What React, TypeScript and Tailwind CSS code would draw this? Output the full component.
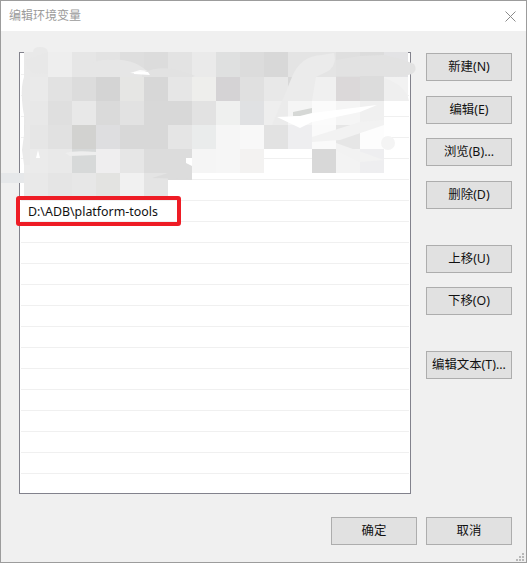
const UI_FONT = "font-['Noto_Sans','Noto_Sans_CJK_SC',sans-serif]";

// pixelated smear over the list, 24px cells starting at x=24, y=53
const mosaic: (string | null)[][] = [
  ["#e9e9e9", "#eeeeee", "#e6e6e6", "#e3e3e3", "#dedede", "#dcdcdc", "#e3e3e3", "#eaeaea", "#dfe0e0", "#dcdcdc", "#d8d8d8", "#e4e4e4", "#e4e4e4", "#dfdfdf", "#dcdcdc", "#e3e3e5"],
  ["#eaeaea", "#e2e2e2", "#dcdcdc", "#d4d4d4", "#e6e6e4", "#d7d7d7", "#e6e6e6", "#eeeeec", "#d5d3d5", "#e0e0e0", "#e8e8e8", "#d8d8d8", "#f0f0f0", "#dbd8d9", "#dcdcdc", "#f2f2f2"],
  ["#e8e8e8", "#dfdfdf", "#e8e8e8", "#dadada", "#e2e2e2", "#d8d8d8", "#d8d8d8", "#e2e2e2", "#eff0ef", "#e0e1e3", "#eeeeee", "#f5f5f5", "#fbfbfb", "#f5f5f5", "#f0f0f0", null],
  ["#e6e6e6", "#e1e1e1", "#d2d2d0", "#dedee0", "#d8d8d8", "#d8d8d8", "#e5e5e5", "#eaecec", "#f6f6f6", "#f8f8f8", "#e2e2e2", "#eeeef0", "#fafafa", "#e6e6e6", "#fdfdfd", null],
  ["#ebebeb", "#e9e9e9", "#d7d9d9", "#efeeef", "#e6e6e6", "#dcdcdc", "#dcdcdc", "#f5f5f5", "#f6f6f6", "#f3f2f1", null, null, "#d8d8d8", "#f3f3f3", "#eeeef0", null],
  ["#e9e9e9", "#e5e5e5", "#e7e7e7", "#e3e3e1", "#f1f1f1", "#e4e4e4", null, null, null, null, null, null, null, null, null, null],
];

// bits of the desktop showing through the window's left edge
const edgeMarks: [number, number, string][] = [
  [15, 5, "#4a3a6a"], [45, 1, "#4a7fb5"], [54, 1, "#4a7fb5"], [69, 3, "#c08a40"], [113, 6, "#6e2a50"],
  [135, 6, "#6e2a50"], [155, 2, "#8a6a30"], [158, 2, "#44403a"], [197, 4, "#5a5a7a"], [212, 1, "#777777"],
  [288, 3, "#5a90c8"], [293, 3, "#5a90c8"], [311, 1, "#777777"], [319, 1, "#4a7fb5"], [328, 1, "#4a7fb5"],
  [342, 1, "#333333"], [350, 1, "#333333"], [366, 1, "#333333"], [371, 1, "#333333"], [392, 1, "#2f5a50"],
  [413, 1, "#2f5a50"], [430, 4, "#4a7fb5"], [447, 6, "#6e2a50"], [453, 2, "#c08a40"], [469, 4, "#4a5a90"], [485, 1, "#777777"],
];

function DialogButton({ label, className = "" }: { label: string; className?: string }) {
  return (
    <button className={`flex h-[28px] w-[86px] items-center justify-center border border-[#adadad] bg-[#e1e1e1] text-[12.4px] text-[#111] ${className}`}>
      {label}
    </button>
  );
}

function SmearOverlay() {
  return (
    <svg className="pointer-events-none absolute left-0 top-0" width="527" height="563" viewBox="0 0 527 563">
      <g shapeRendering="crispEdges">
        {mosaic.map((row, r) =>
          row.map((fill, c) =>
            fill ? <rect key={`${r}-${c}`} x={24 + c * 24} y={r === 0 ? 52 : 53 + r * 24} width="24" height={r === 0 ? 25 : 24} fill={fill} /> : null,
          ),
        )}
        <rect x="1" y="173" width="23" height="10" fill="#e6e8ea" />
        <rect x="168" y="173" width="24" height="7" fill="#dcdcdc" />
      </g>
      <path d="M33 52 Q33 47 40 47 Q47 47 48 52 L48 77 L33 77 Z" fill="#e9e9e9" />
      <path d="M48 52 L26 60 Q24 67 33 73 L48 74 Z" fill="#e8e8e8" />
      <path d="M24 77 Q21 85 22 100 Q23 115 26 120 Q24 135 22 150 L24 165 L30 165 L30 77 Z" fill="#e9e9e9" />
      <path d="M72 76 Q92 58 112 60 Q135 58 150 74 L150 77 L72 77 Z" fill="#e6e6e6" />
      <path d="M130 73 L170 76 L172 74 L140 70 Z" fill="#fbfbfb" />
      <path d="M142 73 Q165 62 195 76 L192 77 L142 77 Z" fill="#e2e2e2" />
      <path d="M292 77 Q300 56 322 55 L334 53 Q337 63 330 70 Q322 74 316 77 L312 101 L288 101 L288 125 L272 125 Z" fill="#ebebeb" />
      <path d="M336 60 L360 56 L384 55 Q400 58 414 64 Q418 70 412 74 Q400 78 384 76 L360 76 L336 76 Z" fill="#e2e2e2" />
      <path d="M384 78 Q406 85 409 101 L384 101 Z" fill="#efefef" />
      <path d="M293 112 L312 108 L312 116 L293 116 Z" fill="#d6d8d6" />
      <path d="M277 117 L300 116 L312 113 L377 105 L360 112 L312 122 L300 128 Z" fill="#ffffff" />
      <path d="M312 137 L360 122 L384 120 L384 125 L340 140 L312 142 Z" fill="#f2f2f2" />
      <path d="M336 143 L384 160 L360 162 L336 150 Z" fill="#f2f2f2" />
      <circle cx="388" cy="143" r="7" fill="#f4f4f4" />
      <path d="M360 170 Q370 172 384 172 L384 166 L360 166 Z" fill="#eeeef0" />
      <path d="M134 72 L148 72 L150 75 L134 74 Z" fill="#ffffff" />
      <path d="M65 153 Q75 150 96 152 L96 155 L70 156 Z" fill="#eeeeee" />
      <path d="M38 150 L40 158 L36 158 Z" fill="#ffffff" />
      <path d="M186 158 L192 158 L192 166 L186 163 Z" fill="#ffffff" />
      <path d="M152 178 L168 173 L192 173 L192 179 Z" fill="#dcdcdc" />
      {edgeMarks.map(([y, h, fill]) => (
        <rect key={y} x="0" y={y} width="1" height={h} fill={fill} shapeRendering="crispEdges" />
      ))}
    </svg>
  );
}

// the border box offsets absolute children by 1px, so pull the drawing back
function SmearOverlayWrap() {
  return (
    <div className="absolute left-[-1px] top-[-1px]">
      <SmearOverlay />
    </div>
  );
}

export default function App() {
  const rows = Array.from({ length: 21 }, (_, i) => i);

  return (
    <div className={`relative flex h-[563px] w-[527px] flex-col overflow-hidden border border-[#9c9c9c] bg-[#f0f0f0] ${UI_FONT}`}>
      {/* title bar */}
      <div className="flex h-[30px] items-center justify-between bg-white pl-[8px] pr-[10px]">
        <span className="text-[12px] text-[#9b9b9b]">编辑环境变量</span>
        <svg width="11" height="11" viewBox="0 0 11 11" className="mt-[1px]">
          <path d="M0.5 0.5 L10.5 10.5 M10.5 0.5 L0.5 10.5" stroke="#8a8a8a" strokeWidth="1" fill="none" />
        </svg>
      </div>

      <div className="flex flex-1 pl-[18px] pt-[21px]">
        {/* path list */}
        <div className="h-[442px] w-[392px] overflow-hidden border border-[#82828c] bg-white px-px pt-px">
          {rows.map((i) => (
            <div key={i} className="flex h-[21px] items-center border-b border-[#f0f0f0] pl-[7px] pt-[2px] text-[12.4px] text-[#111]">
              {i === 7 ? "D:\\ADB\\platform-tools" : ""}
            </div>
          ))}
        </div>

        {/* side buttons */}
        <div className="ml-[15px] flex flex-col pt-px">
          <DialogButton label="新建(N)" />
          <DialogButton label="编辑(E)" className="mt-[15px]" />
          <DialogButton label="浏览(B)..." className="mt-[14px]" />
          <DialogButton label="删除(D)" className="mt-[15px]" />
          <DialogButton label="上移(U)" className="mt-[36px]" />
          <DialogButton label="下移(O)" className="mt-[14px]" />
          <DialogButton label="编辑文本(T)..." className="mt-[36px]" />
        </div>
      </div>

      {/* footer */}
      <div className="flex justify-end gap-[9px] pb-[17px] pr-[14px]">
        <DialogButton label="确定" />
        <DialogButton label="取消" />
      </div>

      <SmearOverlayWrap />

      {/* red annotation box */}
      <div className="absolute left-[15px] top-[195px] h-[30px] w-[165px] rounded-[3px] border-[4.5px] border-[#ee1c25]" />

      {/* resize grip */}
      <div className="absolute bottom-[1px] right-[2px] grid grid-cols-3 gap-px">
        {[0, 0, 1, 0, 1, 1, 1, 1, 1].map((on, i) => (
          <span key={i} className={`h-[2px] w-[2px] ${on ? "bg-[#b8b8b8]" : "bg-transparent"}`} />
        ))}
      </div>
    </div>
  );
}
